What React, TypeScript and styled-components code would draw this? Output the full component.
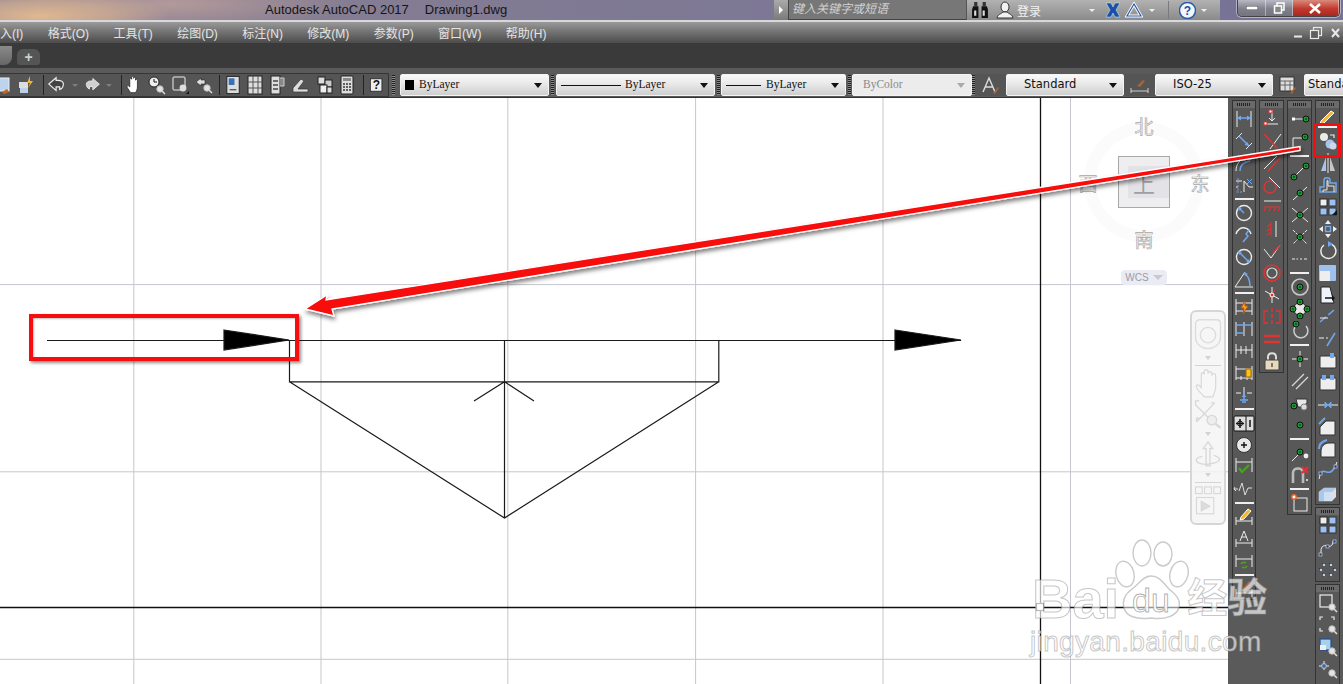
import React from "react";
import styled, { createGlobalStyle } from "styled-components";

const W = "#ececec", B = "#6ea8f0", R = "#e23232";
const CJK = `"Liberation Sans", "Noto Sans CJK SC", sans-serif`;

const Global = createGlobalStyle`
  html, body { margin: 0; padding: 0; background: #555; }
  #root { width: 1343px; height: 684px; }
`;

const Page = styled.div`
  position: relative; width: 1343px; height: 684px; overflow: hidden;
  display: flex; flex-direction: column; font-family: ${CJK};
`;

/* ---------- title bar ---------- */
const TitleBar = styled.header`
  flex: 0 0 22px; display: flex; align-items: stretch; box-sizing: border-box;
  border-bottom: 2px solid #d8d8dc; padding-right: 3px;
  background:
    radial-gradient(ellipse 130px 26px at 40px 16px, #e0b891 0%, rgba(224,184,145,.55) 55%, rgba(224,184,145,0) 100%),
    radial-gradient(ellipse 180px 26px at 170px 4px, #b39a9a 0%, rgba(179,154,154,0) 100%),
    linear-gradient(90deg, #8d8190 0%, #807a93 40%, #757297 100%);
`;
const TitleText = styled.div`
  margin-left: 265px; display: flex; gap: 16px; align-items: center; height: 19px;
  font-size: 13px; color: #151515; white-space: nowrap;
`;
const InfoPanel = styled.div`
  margin-left: auto; width: 446px; display: flex; align-items: center;
  background: linear-gradient(#b2b2b2, #8a8a8a);
`;
const SearchHandle = styled.div`
  width: 14px; height: 100%; display: flex; align-items: center; justify-content: center;
  background: linear-gradient(#aaa, #7a7a7a);
  &::after { content: ""; border-left: 4px solid #fff; border-top: 4px solid transparent; border-bottom: 4px solid transparent; }
`;
const SearchBox = styled.div`
  width: 179px; height: 100%; box-sizing: border-box; background: #777;
  border-left: 1px solid #444; border-right: 1px solid #555; border-bottom: 1px solid #444;
  color: #d2d2d2; font-style: italic; font-size: 12px; line-height: 19px; padding-left: 3px;
`;
const InfoSlot = styled.div<{ $w: number }>`
  width: ${p => p.$w}px; height: 100%; display: flex; align-items: center; justify-content: center; flex: none;
`;
const Login = styled.span`
  font-size: 12px; color: #f2f2f2; width: 63px;
`;
const TinyCaret = styled.span<{ $c?: string }>`
  display: block; border-top: 3px solid ${p => p.$c || "#eee"};
  border-left: 3px solid transparent; border-right: 3px solid transparent;
`;
const WindowButtons = styled.div`
  margin-left: 17px; width: 103px; height: 17px; display: flex; box-sizing: border-box;
  border: 1px solid #444; border-top: 0; border-radius: 0 0 5px 5px; overflow: hidden;
  box-shadow: 0 0 0 1px rgba(255,255,255,.45);
`;
const WinBtn = styled.div<{ $w: number; $close?: boolean }>`
  width: ${p => p.$w}px; display: flex; align-items: center; justify-content: center;
  border-right: 1px solid rgba(255,255,255,.4); box-sizing: border-box;
  background: ${p => p.$close ? "linear-gradient(#d88a7c,#c2382c 55%,#a52a20)" : "linear-gradient(#b9b9c4,#80808c 55%,#74747e)"};
`;

/* ---------- menu ---------- */
const MenuBar = styled.nav`
  flex: 0 0 21px; display: flex; align-items: center; gap: 24.4px;
  background: linear-gradient(#9a9a9a, #7c7c7c 35%, #4c4c4c);
  color: #e4e4e4; font-size: 12px; white-space: nowrap;
`;
const MenuControls = styled.div`
  margin-left: auto; margin-right: 3px; display: flex;
`;

/* ---------- tabs ---------- */
const TabBar = styled.div`
  flex: 0 0 25px; background: #3a3a3a; display: flex; align-items: flex-end; padding-bottom: 3px; box-sizing: border-box;
`;
const TabEnd = styled.div`
  width: 12px; height: 19px; background: linear-gradient(#8a8a8a, #666); border-radius: 0 0 8px 0;
`;
const PlusTab = styled.div`
  margin-left: 5px; width: 23px; height: 16px; background: #555; border-radius: 6px 6px 3px 3px;
  color: #cfcfcf; font: bold 14px/16px "Liberation Sans", sans-serif; text-align: center;
`;

/* ---------- toolbar ---------- */
const ToolBar = styled.div`
  flex: 0 0 30px; box-sizing: border-box; background: #5a5a5a; border-bottom: 1px solid #333;
  padding-top: 6px; display: flex; align-items: flex-start; overflow: hidden;
`;
const ToolGroup = styled.div`
  display: flex; align-items: center; width: 400px; flex: none; margin: -1px 0 0 -12px; height: 22px;
  background: #555; border: solid #363636; border-width: 1px 1px 1px 0; box-sizing: content-box;
`;
const Tool = styled.div<{ $w?: number }>`
  width: ${p => p.$w || 22}px; flex: none; display: flex; align-items: center; justify-content: center;
`;
const ToolCaret = styled(Tool)`
  &::after { content: ""; border-top: 3px solid #7e7e7e; border-left: 3px solid transparent; border-right: 3px solid transparent; }
`;
const ToolSep = styled.div<{ $w?: number }>`
  width: ${p => p.$w || 8}px; height: 20px; flex: none; position: relative;
  background: linear-gradient(#222,#222) center / 1px 100% no-repeat;
`;
const Grip = styled.div<{ $ml: number; $mr: number }>`
  width: 3px; height: 20px; flex: none; margin: 1px ${p => p.$mr}px 0 ${p => p.$ml}px;
  background: repeating-linear-gradient(#1f1f1f 0 1px, #8a8a8a 1px 2px);
`;
const Combo = styled.div<{ $w: number; $off?: boolean }>`
  width: ${p => p.$w}px; height: 22px; flex: none; box-sizing: border-box; border-radius: 2px;
  display: flex; align-items: center; position: relative; overflow: hidden; border: 1px solid #f4f4f4;
  background: ${p => p.$off ? "#ececec" : "linear-gradient(#fafafa, #e6e6e6 50%, #cfcfcf)"};
  color: ${p => p.$off ? "#8b8b8b" : "#111"};
  &::after {
    content: ""; position: absolute; right: 6px; top: 8px;
    border-top: 5px solid ${p => p.$off ? "#aaa" : "#111"};
    border-left: 4px solid transparent; border-right: 4px solid transparent;
  }
`;
const ComboSerif = styled.span<{ $ml: number }>`
  font: 11.5px/1 "Liberation Serif", serif; margin-left: ${p => p.$ml}px; white-space: nowrap;
`;
const ComboSans = styled.span<{ $ml: number }>`
  font: 11.5px/1 "DejaVu Sans", sans-serif; margin-left: ${p => p.$ml}px; white-space: nowrap;
`;
const Swatch = styled.span`
  width: 9px; height: 10px; background: #000; margin-left: 4px; flex: none;
`;
const LineSample = styled.span<{ $w: number }>`
  width: ${p => p.$w}px; height: 1px; background: #111; margin-left: 4px; flex: none;
`;
const StyleIcon = styled(Tool)`
  height: 22px; background: #555;
`;

/* ---------- main ---------- */
const Main = styled.main`
  flex: 1; min-height: 0; display: flex;
`;
const Canvas = styled.div`
  position: relative; flex: 0 0 1228px; background: #fff; overflow: hidden;
`;
const Drawing = styled.svg`
  display: block; width: 1228px; height: 586px;
`;
const Rail = styled.aside`
  flex: 1; background: #5a5a5a; display: flex; gap: 3px; align-items: flex-start;
  padding: 2px 0 0 4px; overflow: hidden; box-sizing: border-box;
`;
const RailColumn = styled.div`
  display: flex; flex-direction: column; gap: 2px; flex: none;
`;
const Bar = styled.div<{ $w: number; $end?: number }>`
  width: ${p => p.$w}px; box-sizing: border-box; border: 1px solid #333; border-top-color: #333;
  background: #585858; display: flex; flex-direction: column; align-items: center;
  ${p => p.$end ? `height: ${p.$end}px; overflow: hidden;` : ""}
`;
const BarGrip = styled.div`
  width: 100%; height: 7px; flex: none; background: #6a6a6a; display: flex; align-items: center; justify-content: center;
  &::after { content: ""; width: 14px; height: 3px; background: repeating-linear-gradient(90deg, #222 0 1px, transparent 1px 2px); }
`;
const BarIcon = styled.div<{ $h?: number }>`
  height: ${p => p.$h || 22}px; width: 100%; flex: none; display: flex; align-items: center; justify-content: center;
`;
const BarSep = styled.div<{ $h?: number }>`
  height: ${p => p.$h || 6}px; width: 100%; flex: none;
  background: linear-gradient(#f0f0f0,#f0f0f0) center / 19px 2px no-repeat;
`;

/* ---------- view cube ---------- */
const ViewCube = styled.div`
  position: absolute; left: 1058px; top: 9px; width: 172px; height: 178px;
  display: grid; grid-template-columns: 60px 52px 60px; grid-template-rows: 36px 13px 52px 12px 36px 14px 15px;
  justify-items: center; align-items: center;
  &::before {
    content: ""; position: absolute; left: 26px; top: 15px; width: 120px; height: 120px; box-sizing: border-box;
    border: 12px solid rgba(240,240,244,.28); border-radius: 50%;
  }
`;
const Compass = styled.span<{ $col: number; $row: number }>`
  grid-column: ${p => p.$col}; grid-row: ${p => p.$row}; position: relative;
  font: 19px "Noto Sans CJK SC", sans-serif; color: #fafafa; -webkit-text-stroke: .7px #a8a8a8;
`;
const CubeFace = styled.div`
  grid-column: 2; grid-row: 3; position: relative; width: 52px; height: 52px; box-sizing: border-box;
  border: 1px solid #a8a8a8; background: #eeeef0;
  display: flex; align-items: flex-end; justify-content: flex-end;
`;
const CubeInner = styled.div`
  width: 41px; height: 32px; margin-bottom: 9px; background: #e3e3e7;
`;
const WcsPill = styled.div`
  grid-column: 1 / 4; grid-row: 7; width: 46px; height: 15px; border-radius: 4px; background: #ebebf3;
  color: #9c9ca6; font: 10px/15px "Liberation Sans", sans-serif; display: flex; gap: 4px; align-items: center; justify-content: center;
  &::after { content: ""; border-top: 5px solid #c8c8d2; border-left: 5px solid transparent; border-right: 5px solid transparent; }
`;

/* ---------- nav bar ---------- */
const NavBar = styled.div`
  position: absolute; left: 1190px; top: 212px; width: 36px; height: 215px; box-sizing: border-box;
  border: 2px solid #d6d6d6; border-radius: 6px; background: rgba(245,245,245,.88);
  display: flex; flex-direction: column; align-items: center; padding-top: 2px;
`;
const NavRule = styled.div`
  width: 26px; height: 1px; background: #d4d4d4; flex: none; margin: 1px 0 2px;
`;
const NavCaret = styled.span`
  flex: none; margin: 2px 0 4px; border-top: 4px solid #d2d2d2; border-left: 3px solid transparent; border-right: 3px solid transparent;
`;

/* ---------- annotations ---------- */
const RedFrame = styled.div`
  position: absolute; left: 29px; top: 314px; width: 270px; height: 47px; box-sizing: border-box;
  border: 4px solid #f70d0d; box-shadow: 2px 2px 3px rgba(0,0,0,.45), inset 1px 1px 2px rgba(0,0,0,.25);
`;
const RedFrameSmall = styled.div`
  position: absolute; left: 1313px; top: 123px; width: 28px; height: 35px; box-sizing: border-box;
  border: 3px solid #f70d0d;
`;
const ArrowLayer = styled.svg`
  position: absolute; left: 0; top: 0; width: 1343px; height: 684px; pointer-events: none;
`;

/* ---------- watermark ---------- */
const Watermark = styled.div`
  position: absolute; left: 1030px; top: 538px; width: 245px; height: 122px; pointer-events: none;
  color: rgba(255,255,255,.66); -webkit-text-stroke: 1px rgba(150,150,150,.55);
`;
const MarkRow = styled.div`
  display: flex; align-items: flex-end; height: 84px;
`;
const MarkBai = styled.span`
  font: 700 56px/60px "Liberation Sans", sans-serif; margin: 0 -6px -7px 2px;
`;
const MarkCn = styled.span`
  font: 700 40px/44px "Noto Sans CJK SC", sans-serif; margin: 0 0 5px -2px; white-space: nowrap;
`;
const MarkUrl = styled.div`
  font: 28px/34px "Liberation Sans", sans-serif; letter-spacing: .35px; white-space: nowrap; margin-top: 3px;
`;

/* ---------- icons ---------- */
const Ico: React.FC<{ s?: number; w?: number; h?: number; children: React.ReactNode }> = ({ s = 1, w = 22, h = 20, children }) => (
  <svg width={w} height={h} viewBox="0 0 22 20" fill="none" stroke={W} strokeWidth={s}>{children}</svg>
);
const Dot = ({ x = 11, y = 10 }: { x?: number; y?: number }) => (
  <g><circle cx={x} cy={y} r={3} fill="#1a9a32" stroke="#111" strokeWidth={1} /><circle cx={x} cy={y} r={.8} fill="#111" stroke="none" /></g>
);
const Sq = ({ x, y, f = "#eee" }: { x: number; y: number; f?: string }) => (
  <rect x={x} y={y} width={7} height={7} fill={f} stroke="#333" strokeWidth={1} />
);
const Mag = ({ x = 15, y = 14 }: { x?: number; y?: number }) => (
  <g><circle cx={x} cy={y} r={3.2} fill="#e4e4e4" stroke="#bbb" /><path d={`M${x + 2} ${y + 2}l3 3`} stroke="#ddd" strokeWidth={1.5} /></g>
);
const Arrow = (d: string, c = B) => <path d={d} fill={c} stroke="none" />;

const icons: Record<string, React.ReactNode> = {
  dLin: <><path d="M4 2v16M18 2v16" /><path d="M4 9h14" stroke={B} strokeWidth={1.5} />{Arrow("M4 9l4-2.5v5zM18 9l-4-2.5v5z")}</>,
  dAli: <><path d="M3 8l6-6M13 18l6-6" /><path d="M6 5l10 10" stroke={B} strokeWidth={1.5} />{Arrow("M16 15l-4.5-1 3-3z")}</>,
  dArc: <><path d="M3 18c0-7 4-12 10-13l3-2" /><path d="M7 18c0-6 4-9 10-10" stroke={B} strokeWidth={1.5} /></>,
  dOrd: <><path d="M3 6h6M3 12h2M11 17V6l5 6h4" /><path d="M5 3v14M9 17H3" stroke={B} strokeDasharray="2 1.5" /><path d="M14 4l5 5M19 4l-5 5" stroke={B} /></>,
  dRad: <><circle cx={11} cy={10} r={7.5} strokeWidth={1.4} /><path d="M11 10L6 5" stroke={B} strokeWidth={1.5} />{Arrow("M5 4l4 1-3 3z")}</>,
  dJog: <><path d="M3 9c1-4 5-7 9-6 3 .5 5 3 6 6" strokeWidth={1.4} /><path d="M16 5l-3 4 2 2-5 6" stroke={B} strokeWidth={1.5} /></>,
  dDia: <><circle cx={11} cy={10} r={7.5} strokeWidth={1.4} /><path d="M7 6l8 8" stroke={B} strokeWidth={1.5} />{Arrow("M5 4l4 1-3 3zM17 16l-4-1 3-3z")}</>,
  dAng: <><path d="M2 18h18M2 18L12 3" /><path d="M12 5c4 3 5 8 5 12" stroke={B} strokeWidth={1.5} />{Arrow("M11 3l4 2-3 2z")}</>,
  dQui: <><path d="M3 2v16M19 2v16M3 6h16M3 14h16" /><path d="M12 4l-4 7h3l-1 6 5-8h-3z" fill="#f5a623" stroke="#c0561a" /></>,
  dCon: <><path d="M3 3v14M11 3v14M19 3v14" /><path d="M3 6h16M3 14h8" stroke={B} strokeWidth={1.5} /></>,
  dBas: <><path d="M3 3v14M8 5v8M13 5v8M19 3v14M3 9h16" /></>,
  dSpc: <><path d="M3 3v14M19 3v14M3 6h16M3 15h16M8 13v4M14 13v4" /><rect x={13} y={6} width={5} height={8} fill="#f5c518" stroke="#a60" /></>,
  dBrk: <><path d="M11 2v8M3 8h5M14 8h5" /><path d="M11 8v7M7 15h8M9 17h4" stroke={B} strokeWidth={1.5} />{Arrow("M11 9l-2.5 3h5z")}</>,
  tol: <><rect x={1} y={3} width={20} height={15} rx={1} fill="#ddd" stroke="#111" /><path d="M13 3v15" stroke="#111" /><path d="M7 6v9M3 10.5h8" stroke="#111" strokeWidth={1.5} /><circle cx={7} cy={10.5} r={2.5} stroke="#111" /><path d="M17 7v7" stroke="#111" strokeWidth={1.5} /></>,
  ctr: <><circle cx={11} cy={10} r={7.5} fill="#e8e8e8" stroke="#333" /><path d="M8 10h6M11 7v6" stroke="#111" strokeWidth={1.4} /></>,
  ins: <><path d="M3 1v14M19 1v14M3 5h16" /><path d="M6 11l3 4 7-7" stroke="#4aa020" strokeWidth={2.4} /></>,
  jLin: <><path d="M1 10h4M2 8l-1 2 2 2M6 12l3-8 3 12 3-7h4" stroke="#ddd" /></>,
  dEd: <><path d="M3 10v8M19 10v8M3 14h16" /><path d="M8 10l7-8 3 2-7 8-4 1z" fill="#f2b632" stroke="#fff" /></>,
  dTx: <><path d="M3 10v8M19 10v8M3 14h16M7 12l4-10 4 10M8.5 8h5" /></>,
  dUp: <><path d="M3 4v12M19 4v12M3 8h16" /><path d="M8 13c1-2 4-2 5-1M14 15c-1 2-4 2-5 1" stroke="#4aa020" strokeWidth={1.6} /></>,
  dStyle: <><path d="M3 10v8M19 10v8M3 14h16" /><path d="M9 10l7-8 2 2-6 8z" fill="#a86432" stroke="none" /></>,

  oSp: <><path d="M11 1v11M6 15h11" /><rect x={8} y={1} width={3} height={3} fill="#fff" stroke={R} /><rect x={3} y={13} width={3} height={3} fill="#fff" stroke={R} /><path d="M8 9l3 3 3-3" /></>,
  perp: <><path d="M9 18L20 3" /><path d="M3 3l13 14" stroke={R} strokeWidth={1.4} /></>,
  par: <><path d="M3 16L16 3" /><path d="M7 18L19 5" stroke={R} strokeWidth={1.4} /></>,
  tan: <><circle cx={9} cy={12} r={6} stroke={R} strokeWidth={1.4} /><path d="M8 2l11 11" /></>,
  flat: <><path d="M3 4h17" /><path d="M3 10h16M5 10l-2 4M10 10l-2 4M15 10l-2 4M19 10l-2 4" stroke={R} strokeWidth={1.2} /></>,
  hatch: <><path d="M15 2v16" /><path d="M10 3v14M10 5l-4 3M10 9l-4 3M10 13l-4 3" stroke={R} strokeWidth={1.2} /></>,
  ang2: <><path d="M3 8l7 9 9-13" /><path d="M12 12l7-8" stroke={R} strokeWidth={1.4} /></>,
  conc: <><circle cx={11} cy={10} r={8} stroke={R} strokeWidth={1.5} /><circle cx={11} cy={10} r={5} stroke="#ddd" strokeWidth={1.2} /></>,
  coin: <><path d="M4 6l14 8M11 2v16" /><path d="M14 5l-7 10" stroke={R} /><circle cx={11} cy={10} r={2} fill={R} stroke="#fff" /></>,
  sym: <><path d="M7 4H3v12h4M15 4h4v12h-4" stroke={R} strokeWidth={1.3} /><path d="M11 1v18" stroke={R} strokeWidth={1.5} strokeDasharray="4 2" /></>,
  eq: <><path d="M3 7h16M3 13h16" stroke={R} strokeWidth={2.6} /></>,
  lock: <><path d="M7 9V6c0-5 8-5 8 0v3" strokeWidth={2} stroke="#ddd" /><rect x={4} y={9} width={14} height={10} rx={1} fill="#e9d9bc" stroke="#444" /><path d="M11 12v4" stroke="#555" strokeWidth={1.5} /></>,

  sEnd: <><path d="M4 10h10" /><rect x={3} y={8.5} width={3} height={3} fill="#fff" stroke="none" /><Dot x={17} y={10} /></>,
  sMid: <><path d="M4 18V7h10" /><Dot x={16} y={6} /></>,
  sCen: <><path d="M4 17L17 4" /><Dot x={5} y={16} /><Dot x={17} y={5} /></>,
  sGeo: <><path d="M4 17L18 4" /><Dot x={11} y={10} /></>,
  sX: <><path d="M3 3l16 14M19 3L3 17" /><Dot /></>,
  sApp: <><path d="M4 3l14 14M18 3L4 17" strokeDasharray="3 1" /><Dot /></>,
  sExt: <><path d="M3 10h6M11 10h2M15 10h4" strokeDasharray="3 1.5" /></>,
  sRing: <><circle cx={11} cy={10} r={8} stroke="#c8c8c8" strokeWidth={1.6} /><Dot /></>,
  sNode: <><rect x={5} y={4} width={12} height={12} rx={5} fill="#e8e8e8" stroke="#222" /><Dot x={11} y={3} /><Dot x={11} y={17} /><Dot x={4} y={10} /><Dot x={18} y={10} /></>,
  sQuad: <><path d="M17 5a7 7 0 1 1-11 1" strokeWidth={1.5} stroke="#cfcfcf" /><path d="M5 4l5 1" /><Dot x={7} y={3} /></>,
  sInt: <><path d="M11 2v16M3 10h16" /><Dot /></>,
  sPar: <><path d="M3 15L15 3M7 18L19 6" stroke="#d8d8d8" strokeWidth={1.3} /></>,
  sIns: <><path d="M7 6h11v4l-5 4H9z" fill="#e8e8e8" stroke="#333" /><Dot x={5} y={13} /><circle cx={15} cy={14} r={3} fill="#ddd" stroke="#888" /></>,
  sPt: <Dot />,
  sTan: <><path d="M3 18L14 7" /><Dot x={11} y={9} /><circle cx={17} cy={13} r={2.4} fill="#eee" stroke="none" /></>,
  sNone: <><path d="M4 18V8c0-6 10-6 10 0v10" stroke="#bbb" strokeWidth={2.6} /><path d="M13 2l6 6M19 2l-6 6" stroke={R} strokeWidth={2.4} /><rect x={17} y={14} width={2} height={2} fill="#ccc" stroke="none" /></>,
  box: <><rect x={5} y={5} width={13} height={13} /><circle cx={5} cy={4} r={2.2} fill="#fff" stroke="#f0672a" strokeWidth={1.5} /></>,

  pencil: <><path d="M4 15l10-10 3 2-10 10-4 1z" fill="#f5b63a" stroke="#fff" /></>,
  copy: <><circle cx={7} cy={6} r={4} fill="#eaeaea" stroke="none" /><circle cx={13} cy={13} r={4.5} fill="#a8c4ec" stroke="none" /><circle cx={16} cy={15} r={3.5} fill="#cfd8e8" stroke="none" /><path d="M13 4h4v3" strokeWidth={1.2} /></>,
  mirror: <><path d="M11 0v20" strokeWidth={1} /><path d="M9 4L4 18h5z" fill="#aac4e8" stroke="none" /><path d="M13 4l5 14h-5z" fill="#c8c8c8" stroke="none" /></>,
  offset: <><path d="M3 17v-5h4V5c0-3 6-3 6 0v3h6v9z" stroke={B} strokeWidth={1.5} /><path d="M6 17v-2h4V6c0-1 1-1 1 0v5h6v6" strokeWidth={1} /></>,
  array: <><rect x={3} y={2} width={7} height={7} fill="#eee" stroke="#222" /><Sq x={12} y={2} f="#9cc0f2" /><Sq x={3} y={11} f="#9cc0f2" /><Sq x={12} y={11} f="#9cc0f2" /><path d="M15 18l5-5v5z" fill="#111" stroke="none" /></>,
  move: <><path d="M11 1l3 4h-6zM11 19l3-4H8zM2 10l4-3v6zM20 10l-4-3v6z" fill="#eee" stroke="none" /><rect x={8.5} y={7.5} width={5} height={5} stroke={B} strokeWidth={1.4} /></>,
  rotate: <><path d="M15 3.5A7.5 7.5 0 1 1 7 4" strokeWidth={1.5} /><path d="M11 0l5 3-5 3z" fill={B} stroke="none" /></>,
  scale: <><rect x={2} y={2} width={17} height={16} rx={1} fill="#9fc0ea" stroke="none" /><rect x={3} y={8} width={10} height={10} fill="#eee" stroke="none" /></>,
  stretch: <><path d="M4 2h9l4 16H4z" fill="#eef2fa" stroke="#222" /><path d="M8 13h7" stroke="#111" strokeWidth={1.5} /><path d="M15 10l3 3-3 3z" fill="#111" stroke="none" /></>,
  trim: <><path d="M3 15L17 3" stroke={B} strokeWidth={1.5} strokeDasharray="8 3" /><path d="M3 11h8" /></>,
  ext: <><path d="M2 9h5M9 9h2" /><path d="M10 17L18 4" stroke={B} strokeWidth={1.5} /></>,
  brk1: <><rect x={3} y={5} width={16} height={12} rx={1} fill="#eee" stroke="#333" /><rect x={13} y={2} width={4} height={5} fill={B} stroke="none" /></>,
  brk2: <><rect x={3} y={5} width={16} height={12} rx={1} fill="#eee" stroke="#333" /><rect x={5} y={2} width={4} height={5} fill={B} stroke="none" /><rect x={13} y={2} width={4} height={5} fill={B} stroke="none" /></>,
  join: <><path d="M1 10h20" /><path d="M8 7v6l3-3zM14 7v6l-3-3z" fill={B} stroke={B} /></>,
  cham: <><path d="M9 4h9v14H3V10z" fill="#eee" stroke="#333" /><path d="M2 7l6-6" stroke={B} strokeWidth={2} /></>,
  fil: <><path d="M12 4h6v14H4v-6c0-5 4-8 8-8z" fill="#eee" stroke="#333" /><path d="M2 10c0-5 4-8 8-9" stroke={B} strokeWidth={2} /></>,
  blend: <><path d="M4 13c3-8 7 5 14-7" stroke={B} strokeWidth={1.5} /><path d="M2 18l1-4M18 6l2-5" /><rect x={2} y={11} width={3} height={3} fill="#1b3f8b" stroke="#ddd" strokeWidth={.6} /><rect x={17} y={4} width={3} height={3} fill="#1b3f8b" stroke="#ddd" strokeWidth={.6} /></>,
  solid: <><path d="M2 9l5-4h12l-4 4v9H2z" fill="#a8c8ec" stroke="#ccc" strokeWidth={.6} /><path d="M7 9h8v9H7z" fill="#cfe0f4" stroke="none" /><path d="M15 9l4-4v9l-4 4z" fill="#dfdfdf" stroke="none" /></>,
  grips: <><rect x={3} y={1} width={7} height={7} fill="#eee" stroke="#222" /><Sq x={12} y={1} f="#9cc0f2" /><Sq x={3} y={10} f="#9cc0f2" /><Sq x={12} y={10} f="#9cc0f2" /></>,
  spline: <><path d="M4 18v-5c0-5 3-6 6-5s6 0 6-5" /><rect x={2} y={15} width={3} height={3} fill="#1b3f8b" stroke="#ddd" strokeWidth={.6} /><rect x={9} y={7} width={3} height={3} fill="#1b3f8b" stroke="#ddd" strokeWidth={.6} /><rect x={16} y={2} width={3} height={3} fill="#1b3f8b" stroke="#ddd" strokeWidth={.6} /></>,
  ring: <>{[[7, 5], [14, 5], [4, 10], [18, 10], [7, 15], [14, 15]].map(([x, y]) => <rect key={x * 100 + y} x={x - 1.5} y={y - 1.5} width={3} height={3} fill="#bcd0ee" stroke="#222" strokeWidth={.5} />)}</>,
  zWin: <><rect x={3} y={2} width={12} height={12} strokeWidth={1.2} /><Mag /></>,
  zExt: <><path d="M3 5V2h3M17 5V2h-3M3 13v3h3" strokeWidth={1.2} /><Mag /></>,
  zObj: <><rect x={3} y={2} width={11} height={11} fill="#a8d0ea" stroke="#1b4f9b" strokeWidth={1.2} /><path d="M3 8h6v5H3z" fill="#eee" stroke="none" /><Mag /></>,
  zCen: <><path d="M7 2v9M2 7h10" strokeWidth={1} /><rect x={5} y={5} width={4} height={4} fill="#2a6ab0" stroke="#ddd" strokeWidth={.6} /><Mag /></>,
  zSmall: <><rect x={5} y={6} width={12} height={14} fill="#f2f2f2" stroke="none" /></>
};

const Ic = ({ n }: { n: string }) => <Ico>{icons[n]}</Ico>;
type Item = string;
const Items = ({ list }: { list: Item[] }) => (
  <>
    {list.map((n, i) => {
      if (n === "-") return <BarSep key={i} />;
      if (n === "--") return <BarSep key={i} $h={8} />;
      if (n === "pencil") return <BarIcon key={i} $h={16}><Ic n={n} /></BarIcon>;
      return <BarIcon key={i}><Ic n={n} /></BarIcon>;
    })}
  </>
);

const col1 = ["dLin", "dAli", "dArc", "dOrd", "-", "dRad", "dJog", "dDia", "dAng", "-", "dQui", "dCon", "dBas", "dSpc", "dBrk", "-", "tol", "ctr", "ins", "jLin", "-", "dEd", "dTx", "dUp", "-", "dStyle"];
const col2 = ["oSp", "perp", "par", "tan", "flat", "hatch", "ang2", "conc", "coin", "sym", "eq", "lock"];
const col3 = ["sEnd", "sMid", "--", "sCen", "sGeo", "sX", "sApp", "sExt", "-", "sRing", "sNode", "sQuad", "-", "sInt", "sPar", "sIns", "sPt", "-", "sTan", "sNone", "-", "box"];
const col4a = ["pencil", "-", "copy", "mirror", "offset", "array", "move", "rotate", "scale", "stretch", "trim", "ext", "brk1", "brk2", "join", "cham", "fil", "blend", "solid"];
const col4b = ["grips", "spline", "ring"];
const col4c = ["zWin", "zExt", "zObj", "zCen", "zSmall"];

const tb: Record<string, React.ReactNode> = {
  save: <><rect x={10} y={3} width={11} height={13} fill="#bcd4ee" stroke="#eee" /><path d="M14 17l5-3 2 3-5 2z" fill="#c8641e" stroke="none" /></>,
  bolt: <><rect x={5} y={7} width={9} height={6} fill="#ddd" stroke="none" /><rect x={6} y={13} width={8} height={5} fill="#bcd0ea" stroke="none" /><path d="M16 1l-3 7h3l-2 5 5-7h-3z" fill="#f2b632" stroke="none" /></>,
  undo: <><path d="M10 2L2 9l8 7v-4h4v3c3-1 4-4 4-6s-2-4-6-4h-2z" fill="#444" stroke="#eee" strokeWidth={1.3} /></>,
  redo: <><path d="M12 2l8 7-8 7v-4H8v3c-3-1-4-4-4-6s2-4 6-4h2z" fill="#cfcfcf" stroke="#eee" strokeWidth={1} /></>,
  hand: <><path d="M6 18c-2-3-4-5-4-7 1-1 2 0 3 1V4c0-1.5 2-1.5 2 0V2c0-1.5 2-1.5 2 0v1c0-1.5 2-1.5 2 0v2c0-1.5 2-1.5 2 0v7c0 3-1 4-2 6z" fill="#fff" stroke="#222" strokeWidth={.8} /></>,
  zRt: <><circle cx={8} cy={7} r={5} fill="#eee" stroke="#222" /><path d="M8 4v3h3" stroke="#111" /><Mag x={14} y={14} /></>,
  zW: <><rect x={4} y={2} width={12} height={13} rx={1} stroke="#eee" /><circle cx={14} cy={13} r={3.4} fill="#ddd" stroke="none" /><path d="M17 19l3-3v3z" fill="#111" stroke="none" /></>,
  zP: <><path d="M8 3L3 7l5 4V9h4V5H8z" fill="#ddd" stroke="#222" strokeWidth={.6} /><Mag x={14} y={13} /></>,
  props: <><rect x={4} y={1} width={13} height={18} fill="#ddd" stroke="#222" /><rect x={6} y={3} width={6} height={7} fill="#3a70b8" stroke="none" /><path d="M7 15h7" stroke="#222" /></>,
  dc: <><rect x={4} y={1} width={14} height={18} fill="#ddd" stroke="#222" /><path d="M4 7h14M4 13h14M9 1v18M14 1v18" stroke="#555" /></>,
  tp: <><rect x={5} y={1} width={9} height={18} fill="#ddd" stroke="#222" /><path d="M14 3h4v8h-4" fill="#888" stroke="#ccc" /><path d="M7 6h5M7 10h5M7 14h5" stroke="#444" strokeWidth={1.6} /></>,
  ss: <><path d="M3 13l8-9 3 2-6 8h10v3H3z" fill="#ddd" stroke="#333" strokeWidth={.7} /></>,
  mk: <><rect x={4} y={2} width={7} height={7} fill="#ddd" stroke="#222" /><rect x={11} y={5} width={7} height={7} fill="#ccc" stroke="#222" /><rect x={6} y={10} width={7} height={8} fill="#eee" stroke="#222" /><rect x={13} y={12} width={5} height={6} fill="#ddd" stroke="#222" /></>,
  calc: <><rect x={5} y={1} width={12} height={18} rx={1} fill="#ddd" stroke="#222" /><rect x={7} y={3} width={8} height={3} fill="#888" stroke="none" /><path d="M7 9h8M7 12h8M7 15h8" stroke="#333" strokeWidth={1.4} strokeDasharray="2 1" /></>,
  help: <><rect x={3} y={2} width={15} height={16} fill="#eee" stroke="#222" /></>,
  aBrush: <><path d="M3 17L9 3l6 14M5.5 12h7" stroke="#ddd" strokeWidth={1.4} /><path d="M13 18l5-6 1 1-4 6z" fill="#a86432" stroke="none" /></>,
  dimBrush: <><path d="M2 13v5M19 13v5M2 16h17" strokeWidth={.8} /><path d="M8 11l6-6 2 1-5 6z" fill="#a86432" stroke="none" /></>,
  tbl: <><rect x={2} y={2} width={14} height={14} fill="#ddd" stroke="#333" /><path d="M2 6h14M2 10h14M7 6v10M12 6v10" stroke="#666" /><path d="M12 18l5-6 1 1-4 6z" fill="#a86432" stroke="none" /></>
};
const T = ({ n, w }: { n: string; w?: number }) => <Tool $w={w}><Ico>{tb[n]}</Ico></Tool>;

const HelpMark = styled.span`
  position: absolute; font: bold 12px/1 "Liberation Sans", sans-serif; color: #111;
`;
const HelpTool = styled(Tool)`
  position: relative; height: 20px;
`;
const CubeWrap = styled.div`
  position: absolute; inset: 0; display: flex; align-items: center; justify-content: center;
`;
const CubeGlyph = styled.span`
  font: 22px "Noto Sans CJK SC", sans-serif; color: #a0a0a4;
`;

const Paw = () => (
  <svg width="76" height="84" viewBox="0 0 76 84" fill="rgba(255,255,255,.55)" stroke="rgba(150,150,150,.5)" strokeWidth={1.4} style={{ flex: "none" }}>
    <ellipse cx="12" cy="36" rx="9" ry="13" transform="rotate(-14 12 36)" />
    <ellipse cx="29" cy="15" rx="9" ry="13" />
    <ellipse cx="50" cy="16" rx="9" ry="12" />
    <ellipse cx="66" cy="36" rx="9" ry="13" transform="rotate(14 66 36)" />
    <path d="M38 38c-8 0-12 8-19 13-8 6-10 12-8 19 2 8 12 12 27 10 14 2 26-2 28-11 2-8-4-13-10-18-6-6-9-13-18-13z" />
    <text x="38" y="74" textAnchor="middle" fontFamily="Liberation Sans, sans-serif" fontSize="34" fill="rgba(255,255,255,.85)" stroke="rgba(140,140,140,.7)" strokeWidth={.9}>du</text>
  </svg>
);

export default function App() {
  return (
    <Page>
      <Global />
      <TitleBar>
        <TitleText><span>Autodesk AutoCAD 2017</span><span>Drawing1.dwg</span></TitleText>
        <InfoPanel>
          <SearchHandle />
          <SearchBox>键入关键字或短语</SearchBox>
          <InfoSlot $w={26}>
            <svg width="18" height="18" viewBox="0 0 17 17"><path d="M2 5h5v11H1V8zM10 5h5l1 3v8h-6z" fill="#111" /><path d="M3 1h3v4H3zM11 1h3v4h-3z" fill="#333" /><path d="M3 9h2v5H3zM11 9h2v5h-2z" fill="#ddd" /></svg>
          </InfoSlot>
          <InfoSlot $w={24}>
            <svg width="18" height="18" viewBox="0 0 18 18"><ellipse cx="9" cy="6" rx="4" ry="5" fill="#f2f2f2" stroke="#333" /><path d="M1 17c1-4 4-4 6-6h4c2 2 5 2 6 6z" fill="#f2f2f2" stroke="#333" /></svg>
          </InfoSlot>
          <Login>登录</Login>
          <InfoSlot $w={24}><TinyCaret /></InfoSlot>
          <InfoSlot $w={18}>
            <svg width="16" height="16" viewBox="0 0 16 16"><path d="M1 1h5l2 4 2-4h5l-4 7 4 7h-5l-2-4-2 4H1l4-7z" fill="#1d4fa8" stroke="#cfe" strokeWidth={.5} /></svg>
          </InfoSlot>
          <InfoSlot $w={24}>
            <svg width="18" height="17" viewBox="0 0 18 17" fill="none"><path d="M9 2L2 14h14z" stroke="#fff" strokeWidth={3} /><path d="M9 2L2 14h14z" stroke="#2a5ba8" strokeWidth={1.2} /></svg>
          </InfoSlot>
          <InfoSlot $w={12}><TinyCaret /></InfoSlot>
          <InfoSlot $w={20}>
            <svg width="1" height="18"><rect width="1" height="18" fill="#7a7a7a" /></svg>
          </InfoSlot>
          <InfoSlot $w={18}>
            <svg width="17" height="17" viewBox="0 0 17 17"><circle cx="8.5" cy="8.5" r="8" fill="#f4f6fb" stroke="#2a5ba8" strokeWidth="1.5" /><text x="8.5" y="13" textAnchor="middle" fontFamily="Liberation Sans" fontWeight="700" fontSize="12" fill="#1d4fa8">?</text></svg>
          </InfoSlot>
          <InfoSlot $w={16}><TinyCaret /></InfoSlot>
        </InfoPanel>
        <WindowButtons>
          <WinBtn $w={29}><svg width="12" height="4"><rect width="12" height="4" fill="#fff" stroke="#444" /></svg></WinBtn>
          <WinBtn $w={27}><svg width="12" height="12" viewBox="0 0 12 12" fill="none"><rect x="4" y="1" width="7" height="7" stroke="#fff" strokeWidth="1.5" /><rect x="1.5" y="4" width="7" height="7" fill="#888" stroke="#fff" strokeWidth="1.5" /></svg></WinBtn>
          <WinBtn $w={47} $close><svg width="14" height="11" viewBox="0 0 14 11"><path d="M2 1l10 9M12 1L2 10" stroke="#fff" strokeWidth="2.6" /></svg></WinBtn>
        </WindowButtons>
      </TitleBar>

      <MenuBar>
        <span>入(I)</span><span>格式(O)</span><span>工具(T)</span><span>绘图(D)</span><span>标注(N)</span><span>修改(M)</span><span>参数(P)</span><span>窗口(W)</span><span>帮助(H)</span>
        <MenuControls>
          <svg width="46" height="14" viewBox="0 0 46 14" fill="none" stroke="#e8e8e8"><path d="M0 10.5h8" strokeWidth="2" /><rect x="19.5" y="1.5" width="8" height="8" strokeWidth="1.2" /><rect x="16.5" y="4.5" width="8" height="8" fill="#5f5f5f" strokeWidth="1.2" /><path d="M38 3l7 8M45 3l-7 8" strokeWidth="2" /></svg>
        </MenuControls>
      </MenuBar>

      <TabBar><TabEnd /><PlusTab>+</PlusTab></TabBar>

      <ToolBar>
        <ToolGroup>
          <T n="save" />
          <T n="bolt" w={29} />
          <ToolSep />
          <T n="undo" w={20} /><ToolCaret $w={16} />
          <T n="redo" w={18} /><ToolCaret $w={16} />
          <ToolSep />
          <T n="hand" w={21} /><T n="zRt" /><T n="zW" w={24} /><T n="zP" w={23} />
          <ToolSep />
          <T n="props" w={21} /><T n="dc" /><T n="tp" /><T n="ss" w={26} /><T n="mk" /><T n="calc" />
          <ToolSep $w={10} />
          <HelpTool $w={17}><Ico w={17}>{tb.help}</Ico><HelpMark>?</HelpMark></HelpTool>
        </ToolGroup>
        <Grip $ml={3} $mr={5} />
        <Combo $w={149}><Swatch /><ComboSerif $ml={5}>ByLayer</ComboSerif></Combo>
        <Grip $ml={2} $mr={2} />
        <Combo $w={159}><LineSample $w={60} /><ComboSerif $ml={4}>ByLayer</ComboSerif></Combo>
        <Grip $ml={2} $mr={1} />
        <Combo $w={125}><LineSample $w={35} /><ComboSerif $ml={5}>ByLayer</ComboSerif></Combo>
        <Grip $ml={2} $mr={1} />
        <Combo $w={120} $off><ComboSerif $ml={10}>ByColor</ComboSerif></Combo>
        <Grip $ml={0} $mr={0} />
        <StyleIcon $w={31}><Ico>{tb.aBrush}</Ico></StyleIcon>
        <Combo $w={118}><ComboSans $ml={17}>Standard</ComboSans></Combo>
        <StyleIcon $w={31}><Ico>{tb.dimBrush}</Ico></StyleIcon>
        <Combo $w={118}><ComboSans $ml={17}>ISO-25</ComboSans></Combo>
        <StyleIcon $w={31}><Ico>{tb.tbl}</Ico></StyleIcon>
        <Combo $w={76}><ComboSans $ml={3}>Standard</ComboSans></Combo>
      </ToolBar>

      <Main>
        <Canvas>
          <Drawing viewBox="0 98 1228 586" fill="none">
            <g stroke="#c6c6ce" strokeWidth="1">
              {[133.8, 321, 507.8, 695.6, 883, 1070.5].map(x => <path key={x} d={`M${x} 98V684`} />)}
              {[284.6, 471.8, 659.3].map(y => <path key={y} d={`M0 ${y}H1228`} />)}
            </g>
            <g stroke="#1a1a1a" strokeWidth="1.2">
              <path d="M47 340.5H961M289.5 340V381.8H718.8V340M289.5 381.8L504.5 518L718.8 381.8M504.5 340V518M474 401L504.5 381.8L534 401" />
              <path d="M1040.5 98V684M0 607.5H1228" stroke="#111" strokeWidth="1.3" />
              <polygon points="224,330 289,340 224,350" fill="#000" />
              <polygon points="895,330 961,340 895,350" fill="#000" />
              <rect x="1036.5" y="603.5" width="7" height="7" fill="#fff" stroke="#333" />
            </g>
          </Drawing>
          <ViewCube>
            <Compass $col={2} $row={1}>北</Compass>
            <Compass $col={1} $row={3}>西</Compass>
            <CubeFace><CubeInner /><CubeWrap><CubeGlyph>上</CubeGlyph></CubeWrap></CubeFace>
            <Compass $col={3} $row={3}>东</Compass>
            <Compass $col={2} $row={5}>南</Compass>
            <WcsPill>WCS</WcsPill>
          </ViewCube>
          <NavBar>
            <svg width="32" height="42" viewBox="0 0 32 42" fill="none" stroke="#dcdcdc" strokeWidth="1.4"><path d="M7 6h18c3 0 4 2 4 4v14c0 8-7 12-13 12S3 32 3 24V10c0-2 2-4 4-4z" /><circle cx="16" cy="22" r="8" /></svg>
            <NavCaret />
            <NavRule />
            <svg width="30" height="32" viewBox="0 0 30 32" fill="#f7f7f7" stroke="#d8d8d8" strokeWidth="1.2"><path d="M11 30C7 25 2 22 3 18c2-1 4 1 5 3V7c0-3 3-3 3 0V4c0-3 4-3 4 0v2c0-3 4-3 4 0v2c0-3 4-3 4 0v12c0 4-2 7-3 10z" /></svg>
            <svg width="30" height="32" viewBox="0 0 30 32" fill="none" stroke="#d8d8d8" strokeWidth="1.4"><path d="M2 6l14 14M22 4L3 24M2 6V2h4M22 4h-4M3 24v-4h4" /><circle cx="19" cy="22" r="5" fill="#eee" /><path d="M23 26l5 4" strokeWidth="2.4" /></svg>
            <NavCaret />
            <svg width="30" height="32" viewBox="0 0 30 32" fill="none" stroke="#d8d8d8" strokeWidth="1.4"><path d="M15 2l5 7h-3v18h-4V9h-3z" fill="#f6f6f6" /><path d="M9 17c-5 1-7 3-6 5s6 4 13 3 11-3 11-5-3-3-6-4" /></svg>
            <NavCaret />
            <NavRule />
            <svg width="30" height="40" viewBox="0 0 30 40" fill="none" stroke="#d8d8d8" strokeWidth="1.2"><rect x="2" y="2" width="7" height="7" /><rect x="11.5" y="2" width="7" height="7" /><rect x="21" y="2" width="7" height="7" /><rect x="3" y="13" width="18" height="17" /><path d="M8 17l9 5-9 5z" fill="#dcdcdc" /></svg>
          </NavBar>
        </Canvas>
        <Rail>
          <RailColumn>
            <Bar $w={24} $end={500}><BarGrip /><Items list={col1} /></Bar>
          </RailColumn>
          <RailColumn>
            <Bar $w={25}><BarGrip /><Items list={col2} /></Bar>
          </RailColumn>
          <RailColumn>
            <Bar $w={25}><BarGrip /><Items list={col3} /></Bar>
          </RailColumn>
          <RailColumn>
            <Bar $w={25}><BarGrip /><Items list={col4a} /></Bar>
            <Bar $w={25}><BarGrip /><Items list={col4b} /></Bar>
            <Bar $w={25}><BarGrip /><Items list={col4c} /></Bar>
          </RailColumn>
        </Rail>
      </Main>

      <RedFrame />
      <RedFrameSmall />
      <ArrowLayer viewBox="0 0 1343 684">
        <defs>
          <filter id="sh" x="-5%" y="-30%" width="110%" height="170%"><feDropShadow dx="1" dy="3" stdDeviation="2" floodColor="#000" floodOpacity=".5" /></filter>
        </defs>
        <polygon filter="url(#sh)" points="305,309 327,295 326,300 1300,146.5 1300,150.5 332,309 334,316" fill="#f80a0a" stroke="#fff" strokeWidth="1.3" strokeLinejoin="miter" />
      </ArrowLayer>
      <Watermark>
        <MarkRow>
          <MarkBai>Bai</MarkBai>
          <Paw />
          <MarkCn>经验</MarkCn>
        </MarkRow>
        <MarkUrl>jingyan.baidu.com</MarkUrl>
      </Watermark>
    </Page>
  );
}
